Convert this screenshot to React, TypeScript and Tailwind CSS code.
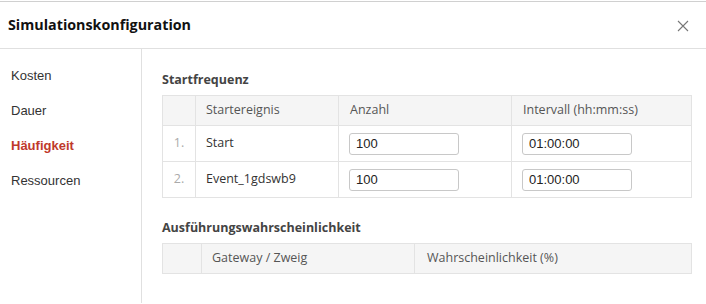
import React from "react";

const SIDEBAR = ["Kosten", "Dauer", "Häufigkeit", "Ressourcen"];

const START_ROWS = [
  { name: "Start", count: "100", interval: "01:00:00" },
  { name: "Event_1gdswb9", count: "100", interval: "01:00:00" },
];

function TextInput({ value }: { value: string }) {
  return (
    <input
      defaultValue={value}
      className="h-[22px] w-[110px] rounded-[3px] border border-[#c8c8c8] bg-white px-[6px] text-[13px] text-[#222] outline-none font-['Liberation_Sans',Arial,sans-serif]"
    />
  );
}

export default function App() {
  return (
    <div className="h-[304px] w-[706px] overflow-hidden bg-white font-['Open_Sans',sans-serif]">
      <div className="mt-px border-t border-[#d0d0d0]" />

      {/* Header */}
      <div className="flex h-[47px] items-center justify-between border-b border-[#e0e0e0] pl-2 pr-[17px]">
        <h1 className="text-[14.3px] font-bold text-[#111]">Simulationskonfiguration</h1>
        <svg width="12" height="12" viewBox="0 0 12 12" className="mt-[2px]">
          <path d="M1 1L11 11M11 1L1 11" stroke="#777" strokeWidth="1.1" />
        </svg>
      </div>

      <div className="flex h-[254px]">
        {/* Sidebar */}
        <div className="flex w-[142px] shrink-0 flex-col gap-[19px] border-r border-[#e0e0e0] pl-[11px] pt-[19px] font-['Liberation_Sans',Arial,sans-serif] text-[13px]">
          {SIDEBAR.map((item) => (
            <div
              key={item}
              className={`leading-[16px] ${item === "Häufigkeit" ? "font-bold text-[#c0392b]" : "text-[#333]"}`}
            >
              {item}
            </div>
          ))}
        </div>

        {/* Content */}
        <div className="flex-1 pl-5 pt-[22px]">
          <h2 className="text-[12.5px] font-bold leading-[18px] text-[#444]">Startfrequenz</h2>
          <table className="mt-[6px] w-[530px] table-fixed border-collapse text-[12.5px] text-[#333]">
            <colgroup>
              <col className="w-[33px]" />
              <col className="w-[143px]" />
              <col className="w-[173px]" />
              <col />
            </colgroup>
            <thead>
              <tr className="h-[30px] bg-[#f5f5f5] text-[#555]">
                <th className="border border-[#e3e3e3]" />
                <th className="border border-[#e3e3e3] pl-[10px] text-left font-normal">Startereignis</th>
                <th className="border border-[#e3e3e3] pl-[11px] text-left font-normal">Anzahl</th>
                <th className="border border-[#e3e3e3] pl-[11px] text-left font-normal">Intervall (hh:mm:ss)</th>
              </tr>
            </thead>
            <tbody>
              {START_ROWS.map((row, i) => (
                <tr key={row.name} className="h-[36px]">
                  <td className="border border-[#e3e3e3] text-center text-[#aaa]">{i + 1}.</td>
                  <td className="border border-[#e3e3e3] pl-[10px]">{row.name}</td>
                  <td className="border border-[#e3e3e3] pl-[10px]">
                    <TextInput value={row.count} />
                  </td>
                  <td className="border border-[#e3e3e3] pl-[10px]">
                    <TextInput value={row.interval} />
                  </td>
                </tr>
              ))}
            </tbody>
          </table>

          <h2 className="mt-[21px] text-[12.5px] font-bold leading-[18px] text-[#444]">Ausführungswahrscheinlichkeit</h2>
          <table className="mt-[6px] w-[530px] table-fixed border-collapse text-[12.5px] text-[#555]">
            <colgroup>
              <col className="w-[39px]" />
              <col className="w-[213px]" />
              <col />
            </colgroup>
            <thead>
              <tr className="h-[30px] bg-[#f5f5f5]">
                <th className="border border-[#e3e3e3]" />
                <th className="border border-[#e3e3e3] pl-[10px] text-left font-normal">Gateway / Zweig</th>
                <th className="border border-[#e3e3e3] pl-[12px] text-left font-normal">Wahrscheinlichkeit (%)</th>
              </tr>
            </thead>
          </table>
        </div>
      </div>
    </div>
  );
}
